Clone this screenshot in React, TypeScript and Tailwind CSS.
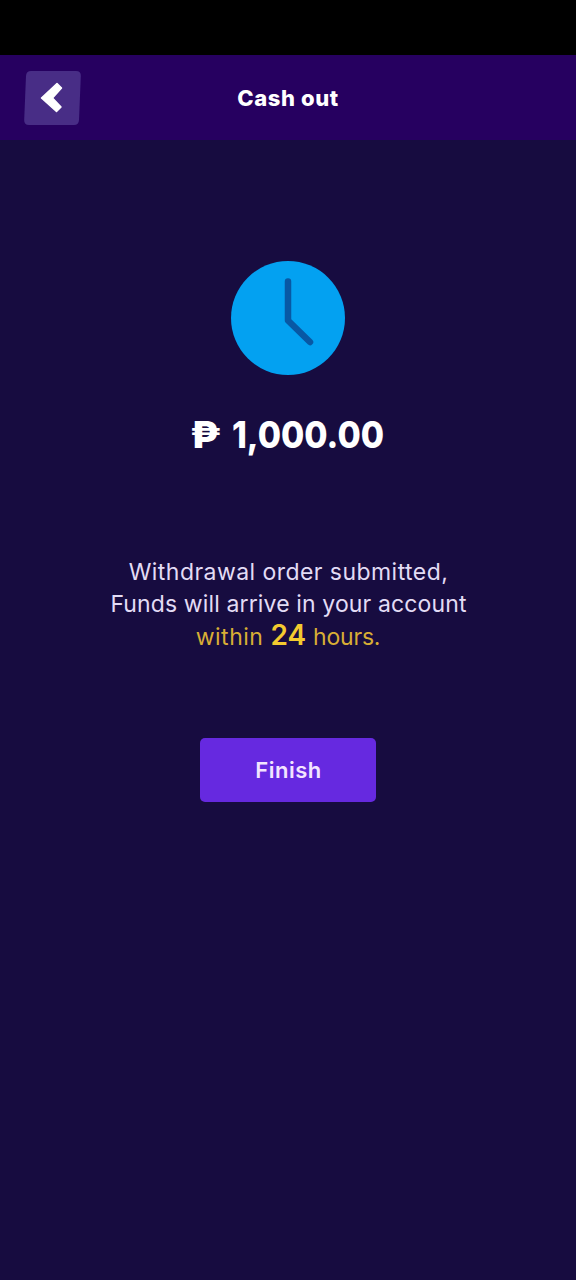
import type { FC } from 'react'

const BackButton: FC = () => {
  return (
    <button type="button" aria-label="Back" className="w-[58px] h-14">
      <svg width="58" height="56" viewBox="0 0 58 56" fill="none">
        <path
          d="M8 1H53Q58 1 57.8 6L56 50Q55.7 55 51 55H6Q1 55 1.2 50L3 6Q3.3 1 8 1Z"
          fill="#482d86"
        />
        <path
          d="M34 13.5L38.5 18L29.5 28L38 37L33.5 41.5L18.5 28Z"
          fill="#ffffff"
          stroke="#ffffff"
          strokeWidth="1.5"
          strokeLinejoin="round"
        />
      </svg>
    </button>
  )
}

const Header: FC = () => {
  return (
    <header className="h-[85px] bg-[#260060] grid grid-cols-[1fr_auto_1fr] items-center px-[23px]">
      <BackButton />
      <h1 className="pt-px text-[22px] leading-8 font-extrabold tracking-[0.6px] text-white">Cash out</h1>
    </header>
  )
}

const ClockIcon: FC = () => {
  return (
    <svg width="114" height="114" viewBox="0 0 114 114" fill="none">
      <circle cx="57" cy="57" r="57" fill="#03a1f1" />
      <path
        d="M57 20.5V59.5L79 81"
        stroke="#0858a4"
        strokeWidth="6.5"
        strokeLinecap="round"
        strokeLinejoin="round"
      />
    </svg>
  )
}

export default function App() {
  return (
    <div className="min-h-screen bg-[#170c40] font-['Inter','Noto_Sans',sans-serif]">
      <div className="h-[55px] bg-black" />
      <Header />
      <main className="flex flex-col items-center pt-[121px]">
        <ClockIcon />
        <p className="mt-[35px] flex gap-3 text-[37px] leading-[50px] font-extrabold text-white whitespace-nowrap">
          <span className="scale-x-112">₱</span>
          <span className="-mr-[15px] origin-left scale-x-91">1,000.00</span>
        </p>
        <p className="mt-24 flex flex-col items-center text-[23px] leading-8 text-[#e3dcf5] whitespace-nowrap">
          <span className="pl-px tracking-[0.45px]">Withdrawal order submitted,</span>
          <span className="pl-px tracking-[0.13px]">Funds will arrive in your account</span>
          <span className="flex h-[30px] items-baseline gap-[7px] leading-[30px] text-[#d8ae35]">
            <span className="tracking-[0.5px]">within</span>
            <b className="text-[28px] font-semibold text-[#f3ca2f]">24</b>
            <span className="tracking-[-0.2px]">hours.</span>
          </span>
        </p>
        <button
          type="button"
          className="mt-[88px] w-44 h-16 rounded-[5px] bg-[#6629e0] pl-px text-[22px] font-semibold tracking-[0.5px] text-[#f3e4ff]"
        >
          Finish
        </button>
      </main>
    </div>
  )
}
